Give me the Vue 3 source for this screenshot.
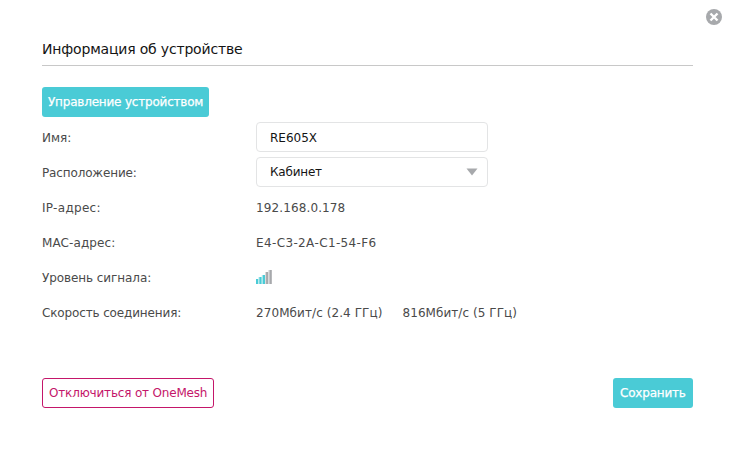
<script setup>
import { ref } from 'vue'

const name = ref('RE605X')
const bars = [
  { h: 5, on: true },
  { h: 7, on: true },
  { h: 9, on: true },
  { h: 12, on: false },
  { h: 14, on: false },
]
</script>

<template>
  <main class="dialog">
    <button class="close" aria-label="Закрыть">
      <svg width="16" height="16" viewBox="0 0 16 16">
        <circle cx="8" cy="8" r="8" fill="#a7a9ac" />
        <path d="M4.5 4.5L11.5 11.5M11.5 4.5L4.5 11.5" stroke="#fff" stroke-width="2.4" />
      </svg>
    </button>
    <h1><span class="t-title">Информация об устройстве</span></h1>
    <button class="btn primary manage"><span class="t-manage">Управление устройством</span></button>
    <div class="rows">
      <div class="row">
        <span class="label"><span class="t-name">Имя:</span></span>
        <div class="field"><span class="t-model">{{ name }}</span></div>
      </div>
      <div class="row">
        <span class="label"><span class="t-place">Расположение:</span></span>
        <div class="field select">
          <span class="t-room">Кабинет</span>
          <svg width="12" height="8" viewBox="0 0 12 8"><path d="M0.5 0.5H11.5L6 7.5Z" fill="#a7a9ac" /></svg>
        </div>
      </div>
      <div class="row">
        <span class="label"><span class="t-ip">IP-адрес:</span></span>
        <span class="t-ipv">192.168.0.178</span>
      </div>
      <div class="row">
        <span class="label"><span class="t-mac">MAC-адрес:</span></span>
        <span class="t-macv">E4-C3-2A-C1-54-F6</span>
      </div>
      <div class="row">
        <span class="label"><span class="t-signal">Уровень сигнала:</span></span>
        <svg class="signal" width="16" height="14" viewBox="0 0 16 14">
          <template v-for="(b, i) in bars" :key="i">
            <rect v-if="i" :x="i * 3.3 - 0.9" :y="14 - b.h" width="1" :height="b.h" :fill="b.on ? '#c0edf1' : '#dcdcdd'" />
            <rect :x="i * 3.35" :y="14 - b.h" width="2.4" :height="b.h" :fill="b.on ? '#4acbd6' : '#a7a9ac'" />
          </template>
        </svg>
      </div>
      <div class="row">
        <span class="label"><span class="t-speed">Скорость соединения:</span></span>
        <span class="t-s24">270Мбит/с (2.4 ГГц)</span>
        <span class="t-s5">816Мбит/с (5 ГГц)</span>
      </div>
    </div>
    <footer>
      <button class="btn danger"><span class="t-off">Отключиться от OneMesh</span></button>
      <button class="btn primary save"><span class="t-save">Сохранить</span></button>
    </footer>
  </main>
</template>

<style>
body {
  background: #fff;
}
</style>

<style scoped>
.dialog {
  position: relative;
  box-sizing: border-box;
  width: 732px;
  height: 463px;
  padding: 33px 39px 0 42px;
  background: #fff;
  color: #4a4a4a;
  font-family: Verdana, "DejaVu Sans", sans-serif;
  font-size: 12px;
  white-space: nowrap;
}
.close {
  position: absolute;
  left: 706px;
  top: 9px;
  display: flex;
  padding: 0;
  border: 0;
  background: none;
}
h1 {
  box-sizing: border-box;
  height: 33px;
  margin: 0 0 21px;
  border-bottom: 1px solid #c8c8c8;
  color: #141414;
  font-size: 14px;
  font-weight: 400;
  line-height: 32px;
}
.btn {
  display: flex;
  box-sizing: border-box;
  height: 30px;
  align-items: center;
  justify-content: flex-start;
  border: 0;
  border-radius: 3px;
  font: inherit;
}
.primary {
  background: #4acbd6;
  color: #fff;
  -webkit-text-stroke: 0.25px #fff;
}
.manage {
  width: 167px;
  padding: 0 0 0 6px;
}
.rows {
  display: flex;
  flex-direction: column;
  margin-top: 3px;
}
.row {
  display: flex;
  height: 35px;
  align-items: center;
}
.label {
  width: 214px;
  flex: none;
}
.field {
  display: flex;
  box-sizing: border-box;
  width: 232px;
  height: 30px;
  align-items: center;
  margin-bottom: 2px;
  padding: 3px 9px 0 13px;
  border: 1px solid #e3e4e5;
  border-radius: 4px;
  color: #141414;
}
.select {
  justify-content: space-between;
  padding-top: 0;
}
.signal {
  display: block;
  margin-bottom: 2px;
}
.t-title { letter-spacing: -0.18px; }
.t-manage { letter-spacing: -0.2px; }
.t-place { letter-spacing: -0.15px; }
.t-ip { letter-spacing: 0.3px; }
.t-mac { letter-spacing: 0.1px; }
.t-signal { letter-spacing: -0.08px; }
.t-speed { letter-spacing: -0.14px; }
.t-room { letter-spacing: -0.2px; }
.t-ipv { letter-spacing: 0.12px; }
.t-macv { letter-spacing: 0.37px; }
.t-s24 { letter-spacing: 0.08px; }
.t-s5 {
  margin-left: 20px;
  letter-spacing: 0.06px;
}
.t-off { letter-spacing: -0.18px; }
.t-save { letter-spacing: -0.2px; }
footer {
  display: flex;
  justify-content: space-between;
  margin-top: 48px;
}
.danger {
  width: 172px;
  padding: 0 0 0 6px;
  border: 1px solid #c4166a;
  background: #fff;
  color: #c4166a;
}
.save {
  width: 80px;
  padding: 0 0 0 7px;
}
</style>
